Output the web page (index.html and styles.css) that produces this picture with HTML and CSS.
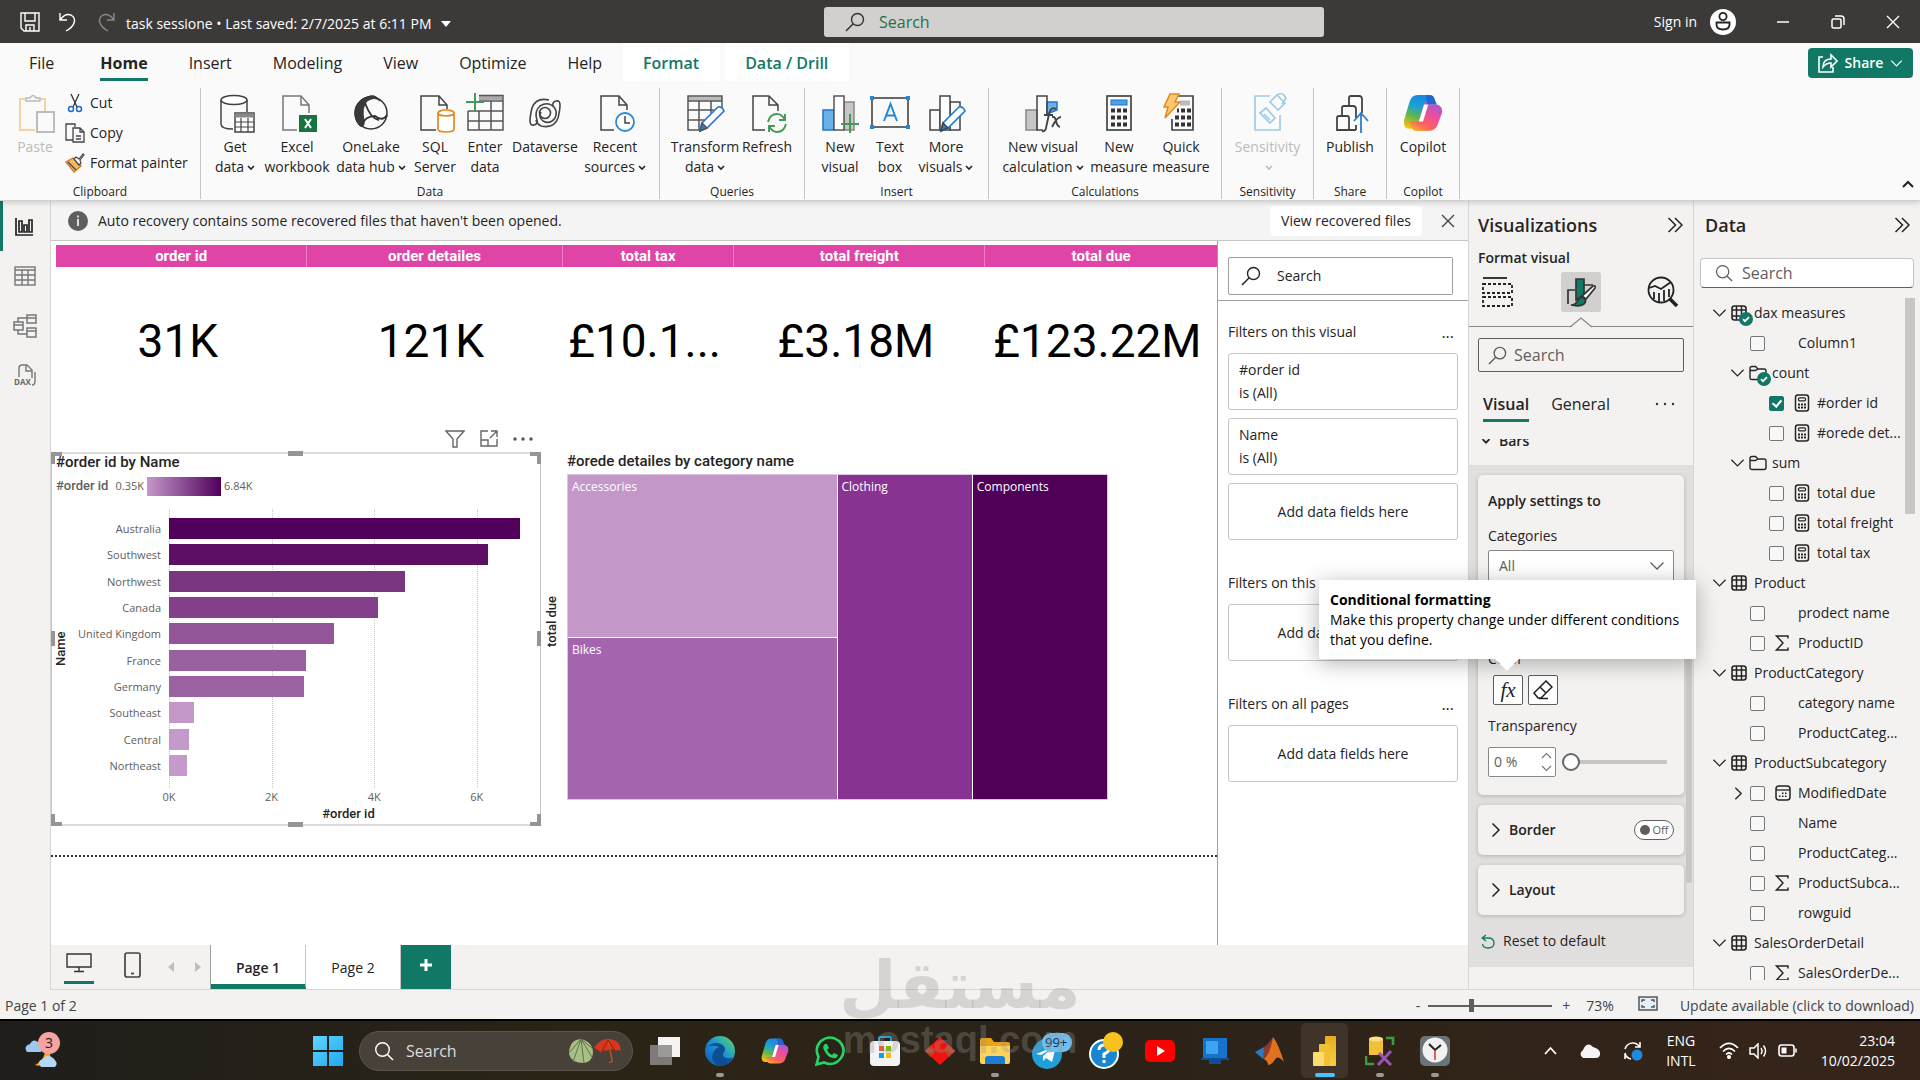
FILE: index.html
```html
<!DOCTYPE html>
<html lang="en">
<head>
<meta charset="utf-8">
<title>task sessione</title>
<link rel="stylesheet" href="styles.css">
</head>
<body>
<svg class="defs" aria-hidden="true">
  <defs>
    <symbol id="mag" viewBox="0 0 20 20"><circle cx="12.500" cy="7.500" r="6" fill="none" stroke="currentColor" stroke-width="1.400"/><path d="M8.200 11.800L1 19" stroke="currentColor" stroke-width="1.500"/></symbol>
    <symbol id="mag2" viewBox="0 0 20 20"><circle cx="8.500" cy="8.500" r="6.800" fill="none" stroke="currentColor" stroke-width="1.400"/><path d="M13.500 13.500L19 19" stroke="currentColor" stroke-width="1.500"/></symbol>
    <symbol id="dn" viewBox="0 0 16 10"><path d="M1.500 1.500L8 8l6.500-6.500" fill="none" stroke="currentColor" stroke-width="1.300"/></symbol>
    <symbol id="dnb" viewBox="0 0 8 6"><path d="M1 1l3 3 3-3" fill="none" stroke="currentColor" stroke-width="1.600"/></symbol>
    <symbol id="rt" viewBox="0 0 10 16"><path d="M1.500 1.500L8 8l-6.500 6.500" fill="none" stroke="currentColor" stroke-width="1.500"/></symbol>
    <symbol id="rr" viewBox="0 0 16 16"><path d="M1.500 1L8.500 8l-7 7M8 1l7 7-7 7" fill="none" stroke="currentColor" stroke-width="1.500"/></symbol>
    <symbol id="x" viewBox="0 0 14 14"><path d="M1 1l12 12M13 1L1 13" fill="none" stroke="currentColor" stroke-width="1.400"/></symbol>
    <symbol id="tbl" viewBox="0 0 16 16"><rect x="1" y="1" width="14" height="14" rx="2.500" fill="none" stroke="currentColor" stroke-width="1.600"/><path d="M5.500 1v14M10.500 1v14M1 5h14M1 11h14" stroke="currentColor" stroke-width="1.500"/></symbol>
    <symbol id="fold" viewBox="0 0 18 16"><path d="M1 3.500Q1 1.500 3 1.500h3.500l2.500 2.500h6q2 0 2 2v6.500q0 2-2 2H3q-2 0-2-2zM1 5.500h5.500L9 4" fill="none" stroke="currentColor" stroke-width="1.400"/></symbol>
    <symbol id="calc" viewBox="0 0 16 18"><rect x="1.500" y="1" width="13" height="16" rx="2.500" fill="none" stroke="currentColor" stroke-width="1.500"/><rect x="4.500" y="3.800" width="7" height="3" rx="1" fill="none" stroke="currentColor" stroke-width="1.200"/><path d="M4 10.500h2m1 0h2m1 0h2M4 13.500h2m1 0h2m1 0h2" stroke="currentColor" stroke-width="1.800"/></symbol>
    <symbol id="sig" viewBox="0 0 14 16"><path d="M13 3.500V1H1.500L8 8l-6.500 7H13v-2.500" fill="none" stroke="currentColor" stroke-width="1.400"/></symbol>
    <symbol id="cal" viewBox="0 0 16 16"><rect x="1" y="1" width="14" height="14" rx="3" fill="none" stroke="currentColor" stroke-width="1.500"/><path d="M1 5h14" stroke="currentColor" stroke-width="1.300"/><path d="M7 8.300h1.500m1.500 0h1.500M4 11.300h1.500m1.500 0h1.500m1.500 0h1.500" stroke="currentColor" stroke-width="1.400"/></symbol>
    <symbol id="badge" viewBox="0 0 14 14"><circle cx="7" cy="7" r="7" fill="#117865"/><path d="M4 7.200l2 2 4-4" fill="none" stroke="#fff" stroke-width="1.800"/></symbol>
    <symbol id="copilot" viewBox="0 0 38 34">
      <path d="M14 0h11q4 0 5 4l2 5h-9l-6 20q-1 3-5 3h-6q-6 0-5-8L6 7q2-7 8-7z" fill="url(#cpA)"/>
      <path d="M24 34H13q-4 0-5-4l-2-5h9l6-20q1 4 5 4h6q6 1 5 8l-4 11q-2 6-9 6z" fill="url(#cpB)"/>
      <path d="M20 9h4l-5 16h-4z" fill="#fff"/>
      <path d="M22 0h3q4 0 5 4l2 5h-9z" fill="#2b4fc4" opacity=".6"/>
    </symbol>
    <linearGradient id="cpA" x1=".6" y1="0" x2=".2" y2="1"><stop offset="0" stop-color="#1a84e0"/><stop offset=".35" stop-color="#1a9fd8"/><stop offset=".65" stop-color="#5fb84a"/><stop offset="1" stop-color="#ffc20f"/></linearGradient>
    <linearGradient id="cpB" x1=".8" y1="0" x2=".3" y2="1"><stop offset="0" stop-color="#9b5ae0"/><stop offset=".45" stop-color="#ee4d9b"/><stop offset=".8" stop-color="#f9655b"/><stop offset="1" stop-color="#f8a33a"/></linearGradient>
    <linearGradient id="edge" x1="0" y1="1" x2="1" y2="0"><stop offset="0" stop-color="#0c59a4"/><stop offset=".5" stop-color="#1b8fdc"/><stop offset="1" stop-color="#5ee05c"/></linearGradient>
    <linearGradient id="win" x1="0" y1="0" x2="1" y2="1"><stop offset="0" stop-color="#5fd6ff"/><stop offset="1" stop-color="#1fa7f0"/></linearGradient>
    <linearGradient id="pbi" x1="0" y1="0" x2="0" y2="1"><stop offset="0" stop-color="#e8ad1d"/><stop offset="1" stop-color="#f5cf4a"/></linearGradient>
  </defs>
</svg>

<header class="titlebar">
  <div class="tb-left">
    <button class="ib" aria-label="Save"><svg width="20" height="20" fill="none" stroke="#fff" stroke-width="1.400"><path d="M1 1h18v18H4l-3-3zM5 1v8h10V1M6 19v-6h8v6M10 19v-4"/></svg></button>
    <button class="ib" aria-label="Undo"><svg width="20" height="20" fill="none" stroke="#fff" stroke-width="1.400"><path d="M2 1v7h7M2 8q5-7 11-5 5 3 3 8-1 4-8 8"/></svg></button>
    <button class="ib" aria-label="Redo"><svg width="20" height="20" fill="none" stroke="#888" stroke-width="1.400"><path d="M18 1v7h-7M18 8q-5-7-11-5-5 3-3 8 1 4 8 8"/></svg></button>
    <button class="doc">task sessione • Last saved: 2/7/2025 at 6:11 PM <svg width="10" height="6"><path d="M0 0h10L5 6z" fill="#fff"/></svg></button>
  </div>
  <label class="tb-search"><svg width="20" height="20"><use href="#mag"/></svg><input type="text" placeholder="Search" aria-label="Search"></label>
  <div class="tb-right">
    <button class="sign">Sign in <svg width="26" height="26"><circle cx="13" cy="13" r="13" fill="#fff"/><circle cx="13" cy="7.500" r="3.600" fill="none" stroke="#222" stroke-width="1.800"/><path d="M6.500 13.500h13v2q0 5-6.500 5t-6.500-5z" fill="none" stroke="#222" stroke-width="1.800"/></svg></button>
    <button class="win" aria-label="Minimize"><svg width="14" height="14"><path d="M1 7h12" stroke="#fff" stroke-width="1.500"/></svg></button>
    <button class="win" aria-label="Restore"><svg width="14" height="14" fill="none" stroke="#fff" stroke-width="1.500"><rect x="1" y="4" width="9" height="9" rx="1.500"/><path d="M4 1h6q3 0 3 3v6"/></svg></button>
    <button class="win" aria-label="Close"><svg width="14" height="14" color="#fff"><use href="#x"/></svg></button>
  </div>
</header>

<section class="ribbon">
  <nav class="tabs">
    <a href="#" class="file">File</a><a href="#" class="on"><span>Home</span></a><a href="#">Insert</a><a href="#">Modeling</a><a href="#">View</a><a href="#">Optimize</a><a href="#">Help</a><a href="#" class="ctx">Format</a><a href="#" class="ctx">Data / Drill</a>
    <button class="share"><svg width="20" height="20" fill="none" stroke="#fff" stroke-width="1.600"><path d="M5 4H1v15h14v-5M5 14q0-8 8-8V2l6 6-6 6v-4q-5 0-8 4z"/></svg>Share<svg width="13" height="9"><use href="#dn" stroke-width="2"/></svg></button>
  </nav>
  <div class="groups">
    <div class="grp g-clip">
      <div class="btns">
        <button class="rb off"><svg width="40" height="40" fill="none"><path d="M11 6H5v31h15" stroke="#f3d3a0" stroke-width="2"/><path d="M25 6h5v12" stroke="#f3d3a0" stroke-width="2"/><path d="M11 8V5h4q3-5 6 0h4v3z" stroke="#bbb" stroke-width="1.500"/><rect x="22" y="19" width="17" height="20" fill="#fafafa" stroke="#b5b5b5" stroke-width="1.800"/></svg>Paste</button>
        <div class="small">
          <button><svg width="20" height="20" fill="none"><path d="M6 1l6 13M14 1L8 14" stroke="#333" stroke-width="1.300"/><circle cx="6" cy="16" r="2.500" stroke="#1e6fc0" stroke-width="1.500"/><circle cx="14" cy="16" r="2.500" stroke="#1e6fc0" stroke-width="1.500"/></svg>Cut</button>
          <button><svg width="20" height="20" fill="none" stroke="#444" stroke-width="1.300"><path d="M8 17H1V1h9v3M8 5h7l4 4v10H8zM15 5v4h4M11 13h5M11 16h5"/></svg>Copy</button>
          <button><svg width="20" height="20" fill="none"><path d="M8 5l8 8-7 6L1 9z" fill="#f6b765" stroke="#d07c1f" stroke-width="1.400"/><path d="M3 9l8 8M9 6l2-2 3 2 4-5 1 1-4 5 1 3-2 2z" stroke="#444" stroke-width="1.200" fill="#fafafa"/></svg>Format painter</button>
        </div>
      </div>
      <div class="gl">Clipboard</div>
    </div>
    <div class="grp g-data">
      <div class="btns">
        <button class="rb"><svg width="40" height="40" fill="none" stroke="#444" stroke-width="1.500"><path d="M18 36Q6 36 6 31V7M32 7v12"/><ellipse cx="19" cy="7" rx="13" ry="4.500" fill="#fff"/><rect x="20" y="20" width="19" height="19" fill="#fff"/><path d="M20 22.500h19" stroke-width="4" stroke="#888"/><path d="M20 29h19M20 34h19M26 25v14M33 25v14" stroke-width="1.200"/></svg>Get<br><span>data<svg class="c" width="8" height="6"><use href="#dnb"/></svg></span></button>
        <button class="rb"><svg width="40" height="40" fill="none" stroke="#777" stroke-width="1.500"><path d="M20 37H6V3h18l8 9v8M24 3v9h8"/><rect x="22" y="22" width="18" height="17" fill="#17733f" stroke="none"/><path d="M28 26l6 9M34 26l-6 9" stroke="#fff" stroke-width="2"/></svg>Excel<br><span>workbook</span></button>
        <button class="rb"><svg width="40" height="40" fill="none" stroke="#333"><circle cx="20" cy="20" r="16" stroke-width="1.500"/><path d="M16 4C4 7 0 24 9 33q5 2 4-6-3-12 3-19 8-5 13 0-5-8-13-4z" fill="#3b3a39"/><path d="M14 10q6 16 14 17M10 33q4-10 14-10 8 6 12-1" stroke-width="1.800"/></svg>OneLake<br><span>data hub<svg class="c" width="8" height="6"><use href="#dnb"/></svg></span></button>
        <button class="rb"><svg width="40" height="40" fill="none" stroke="#444" stroke-width="1.500"><path d="M21 37H6V3h18l8 9v4M24 3v9h8"/><path d="M23 20v16q0 3 8 3t8-3V20" fill="#fff" stroke="#e08a1e" stroke-width="1.700"/><ellipse cx="31" cy="20" rx="8" ry="3" fill="#fff" stroke="#e08a1e" stroke-width="1.700"/></svg>SQL<br><span>Server</span></button>
        <button class="rb"><svg width="40" height="40" fill="none" stroke="#555"><path d="M14 5h23" stroke="#aaa" stroke-width="4"/><path d="M14 2.500h24V37H3V18M14 8h24M3 18h35M3 28h35M14 18v19M26 8v29" stroke-width="1.500"/><path d="M10 0v18M1 9h18" stroke="#3f9b55" stroke-width="2"/></svg>Enter<br><span>data</span></button>
        <button class="rb"><svg width="40" height="40" fill="none" stroke="#444" stroke-width="1.600"><path d="M24 7q-13-3-17 8-2 8-2 13 0 5 4 4 4-1 3-5-3-9 3-14 8-5 14 1 4 5 1 11-5 7-12 3-5-4-2-9"/><path d="M16 33q13 3 17-8 2-8 2-13 0-5-4-4-4 1-3 5M16 33q-4-2-5-6"/><circle cx="20" cy="20" r="5.500"/></svg>Dataverse</button>
        <button class="rb"><svg width="40" height="40" fill="none" stroke="#444" stroke-width="1.500"><path d="M19 37H6V3h18l8 9v5M24 3v9h8"/><circle cx="30" cy="29" r="9" fill="#fff" stroke="#2b88d8" stroke-width="1.800"/><path d="M30 23v7h5"/></svg>Recent<br><span>sources<svg class="c" width="8" height="6"><use href="#dnb"/></svg></span></button>
      </div>
      <div class="gl">Data</div>
    </div>
    <div class="grp g-query">
      <div class="btns">
        <button class="rb"><svg width="40" height="40" fill="none" stroke="#555" stroke-width="1.500"><path d="M3 5.500h34" stroke="#bbb" stroke-width="4"/><path d="M15 37H3V3h34v12M3 8h34M3 17h26M3 27h18M14 8v29M26 8v12"/><path d="M15 38l2-8 16-16q4-1 6 4L22 35z" fill="#fff" stroke="#2b7cd3" stroke-width="1.700"/><path d="M15 38l2-8 5 5z" fill="#2b7cd3"/></svg>Transform<br><span>data<svg class="c" width="8" height="6"><use href="#dnb"/></svg></span></button>
        <button class="rb"><svg width="40" height="40" fill="none" stroke="#444" stroke-width="1.500"><path d="M18 37H6V3h16l9 9v6M22 3v9h9"/><path d="M21 29q2-8 9-8 5 0 8 6M38 21v6h-6M39 31q-2 8-9 8-5 0-8-6M22 39v-6h6" stroke="#3f9b55" stroke-width="1.900"/></svg>Refresh</button>
      </div>
      <div class="gl">Queries</div>
    </div>
    <div class="grp g-ins">
      <div class="btns">
        <button class="rb"><svg width="40" height="40" fill="none" stroke="#555" stroke-width="1.500"><rect x="3" y="17" width="11" height="20" fill="#6db1ea" stroke="#1f74c4"/><rect x="24" y="9" width="10" height="28" fill="#c8c6c4" stroke="#888"/><rect x="14" y="3" width="10" height="34" fill="#fff"/><path d="M30 21v19M21 31h18" stroke="#3f9b55" stroke-width="2"/></svg>New<br><span>visual</span></button>
        <button class="rb"><svg width="40" height="40" fill="none"><rect x="2" y="5" width="36" height="29" stroke="#444" stroke-width="1.600"/><path d="M0 3h4v4H0zM36 3h4v4h-4zM0 32h4v4H0zM36 32h4v4h-4z" fill="#1f87d6"/><path d="M14 28l6.500-17L27 28M16 22.500h9" stroke="#1f87d6" stroke-width="1.900"/></svg>Text<br><span>box</span></button>
        <button class="rb"><svg width="40" height="40" fill="none" stroke="#444" stroke-width="1.500"><path d="M4 17h10v20H4zM24 9h10v28H24z"/><rect x="14" y="3" width="10" height="34" fill="#fff"/><path d="M15 38l2-8 16-16q4-1 6 4L22 35z" fill="#fff" stroke="#2b7cd3" stroke-width="1.700"/><path d="M15 38l2-8 5 5z" fill="#2b7cd3"/></svg>More<br><span>visuals<svg class="c" width="8" height="6"><use href="#dnb"/></svg></span></button>
      </div>
      <div class="gl">Insert</div>
    </div>
    <div class="grp g-calc">
      <div class="btns">
        <button class="rb"><svg width="40" height="40" fill="none" stroke="#444" stroke-width="1.500"><rect x="3" y="17" width="11" height="20" fill="#c8c6c4" stroke="#888"/><path d="M24 9h10v8l-10 4z" fill="#6db1ea" stroke="#1f74c4"/><path d="M20 37h-6V3h10v18"/><path d="M33 16q-5-3-7 5l-3 14q-1 4-4 3M21 22h9M29 24q3-1 4 4t4 6M38 24q-4 0-9 10" stroke-width="1.900"/></svg>New visual<br><span>calculation<svg class="c" width="8" height="6"><use href="#dnb"/></svg></span></button>
        <button class="rb"><svg width="40" height="40" fill="none"><rect x="8" y="3" width="24" height="34" stroke="#444" stroke-width="1.700"/><rect x="12" y="7" width="16" height="5" fill="#4ba0e8" stroke="#1f74c4"/><path d="M12 17.500h4m2 0h4m2 0h4M12 24.500h4m2 0h4m2 0h4M12 31.500h4m2 0h4m2 0h4" stroke="#333" stroke-width="4"/></svg>New<br><span>measure</span></button>
        <button class="rb"><svg width="40" height="40" fill="none"><path d="M17 3h15v34H11V26" stroke="#444" stroke-width="1.700"/><path d="M19 10h10" stroke="#bbb" stroke-width="5"/><path d="M16 17.500h2m2 0h4m2 0h4M14 24.500h4m2 0h4m2 0h4M14 31.500h4m2 0h4m2 0h4" stroke="#333" stroke-width="4"/><path d="M9 1h9l-4 8h5L4 25l3-11H3z" fill="#fbc871" stroke="#e08a1e" stroke-width="1.500"/></svg>Quick<br><span>measure</span></button>
      </div>
      <div class="gl">Calculations</div>
    </div>
    <div class="grp g-sens">
      <div class="btns">
        <button class="rb off"><svg width="40" height="40" fill="none" stroke="#9fcbe8" stroke-width="1.700"><path d="M22 3H7v34h25V22M12 20l6-5 9 10-5 5zM16 21l6 6M22 9l7-7 8 8-7 7zM29 2l5-2 4 5-4 6"/></svg>Sensitivity<br><svg class="c" width="8" height="6"><use href="#dnb"/></svg></button>
      </div>
      <div class="gl">Sensitivity</div>
    </div>
    <div class="grp g-one">
      <div class="btns">
        <button class="rb"><svg width="40" height="40" fill="none" stroke="#444" stroke-width="1.800"><path d="M26 37H7V25q0-2 2-2h8q2 0 2 2v12M12 22v-7q0-2 2-2h9q3 0 3 3v9M19 12V5q0-2 2-2h8q3 0 3 3v14M26 32v5"/><path d="M31 40V21M24 28l7-8 7 8" stroke="#2b7cd3"/></svg>Publish</button>
      </div>
      <div class="gl">Share</div>
    </div>
    <div class="grp g-one">
      <div class="btns">
        <button class="rb"><svg width="40" height="40" viewBox="0 -2 38 38"><use href="#copilot" width="38" height="34"/></svg>Copilot</button>
      </div>
      <div class="gl">Copilot</div>
    </div>
    <button class="collapse" aria-label="Collapse ribbon"><svg width="12" height="8"><path d="M1 7l5-5 5 5" fill="none" stroke="#222" stroke-width="2"/></svg></button>
  </div>
</section>

<main class="work">
  <nav class="rail">
    <button class="on" aria-label="Report view"><svg width="18" height="19" fill="none" stroke="#222" stroke-width="1.700"><path d="M1 1v17h17"/><path d="M4 4h3v11H4zM9 8h3v7H9zM14 3h3v12h-3z"/></svg></button>
    <button aria-label="Table view"><svg width="22" height="20" fill="none" stroke="#777" stroke-width="1.400"><rect x="1" y="1" width="20" height="18"/><path d="M1 4h20M1 9h20M1 14h20M8 4v15M14 4v15"/></svg></button>
    <button aria-label="Model view"><svg width="24" height="24" fill="none" stroke="#777" stroke-width="1.500"><path d="M14 1h9v8h-9zM1 8h9v8H1zM14 14h9v9h-9zM14 4h9M1 11h9M14 17h9M5 8V4h9M5 16v4h9"/></svg></button>
    <button aria-label="DAX query view"><svg width="24" height="24" fill="none" stroke="#777" stroke-width="1.400"><path d="M6 13V4q0-3 3-3h5l5 5v8M13 1v6h6M22 8v9q0 4-3 4"/><text x="1" y="21" font-size="8" font-weight="700" stroke="none" fill="#666">DAX</text></svg></button>
  </nav>

  <section class="center">
    <div class="info">
      <svg width="20" height="20"><circle cx="10" cy="10" r="10" fill="#605e5c"/><path d="M10 8v7M10 4.500v2" stroke="#fff" stroke-width="1.600"/></svg>
      <span>Auto recovery contains some recovered files that haven't been opened.</span>
      <button class="view">View recovered files</button>
      <button class="ib" aria-label="Dismiss"><svg width="14" height="14"><use href="#x"/></svg></button>
    </div>
    <div class="split">
      <div class="canvas">
        <table class="kpi">
          <colgroup><col class="k1"><col class="k2"><col class="k3"><col class="k1"><col class="k4"></colgroup>
          <thead><tr><th>order id</th><th>order detailes</th><th>total tax</th><th>total freight</th><th>total due</th></tr></thead>
          <tbody><tr><td>31K</td><td>121K</td><td>£10.1...</td><td>£3.18M</td><td>£123.22M</td></tr></tbody>
        </table>
        <div class="visuals">
          <div class="vwrap">
            <div class="vtools">
              <button class="ib" aria-label="Filter"><svg width="20" height="18" fill="none" stroke="#666" stroke-width="1.400"><path d="M1 1h18l-7 8v8H8V9z"/></svg></button>
              <button class="ib" aria-label="Focus mode"><svg width="18" height="17" fill="none" stroke="#666" stroke-width="1.400"><path d="M8 1H1v15h16V9M11 1h6v6M17 1l-7 7M1 10h7v6"/></svg></button>
              <button class="ib" aria-label="More options"><svg width="20" height="6" fill="#555"><circle cx="2" cy="3" r="1.700"/><circle cx="10" cy="3" r="1.700"/><circle cx="18" cy="3" r="1.700"/></svg></button>
            </div>
            <div class="visual sel">
              <i class="h tl"></i><i class="h tc"></i><i class="h tr"></i><i class="h ml"></i><i class="h mr"></i><i class="h bl"></i><i class="h bc"></i><i class="h br"></i>
              <h3>#order id by Name</h3>
              <div class="legend"><b>#order id</b><span>0.35K</span><i></i><span>6.84K</span></div>
              <div class="chart">
                <div class="vt">Name</div>
                <div class="cats"><span>Australia</span><span>Southwest</span><span>Northwest</span><span>Canada</span><span>United Kingdom</span><span>France</span><span>Germany</span><span>Southeast</span><span>Central</span><span>Northeast</span></div>
                <div class="plot">
                  <div class="lines"><i></i><i></i><i></i><i></i></div>
                  <div class="bars">
                    <i style="width:97.8%;background:#50005b"></i>
                    <i style="width:88.9%;background:#5d0f66"></i>
                    <i style="width:65.6%;background:#7a3580"></i>
                    <i style="width:58.1%;background:#833f8a"></i>
                    <i style="width:46%;background:#925599"></i>
                    <i style="width:38.2%;background:#9a61a1"></i>
                    <i style="width:37.5%;background:#9b62a2"></i>
                    <i style="width:7%;background:#c397c8"></i>
                    <i style="width:5.6%;background:#c49aca"></i>
                    <i style="width:5.1%;background:#c49aca"></i>
                  </div>
                </div>
                <div class="ticks"><span>0K</span><span>2K</span><span>4K</span><span>6K</span></div>
                <div class="xt">#order id</div>
              </div>
            </div>
          </div>
          <div class="tm">
            <h3>#orede detailes by category name</h3>
            <div class="vt">total due</div>
            <div class="map"><div class="m-acc">Accessories</div><div class="m-bike">Bikes</div><div class="m-clo">Clothing</div><div class="m-com">Components</div></div>
          </div>
        </div>
        <div class="pageend"></div>
      </div>
      <aside class="filters">
        <div class="fs"><label class="sbox"><svg width="20" height="20"><use href="#mag"/></svg><input type="text" placeholder="Search" aria-label="Search filters"></label></div>
        <div class="fsec"><h4>Filters on this visual<button aria-label="More">...</button></h4>
          <div class="fc">#order id<br>is (All)</div><div class="fc">Name<br>is (All)</div><div class="fc add">Add data fields here</div></div>
        <div class="fsec"><h4>Filters on this page<button aria-label="More">...</button></h4><div class="fc add">Add data fields here</div></div>
        <div class="fsec"><h4>Filters on all pages<button aria-label="More">...</button></h4><div class="fc add">Add data fields here</div></div>
      </aside>
    </div>
    <div class="pages">
      <div class="devs">
        <button class="dev on" aria-label="Desktop layout"><svg width="26" height="20" fill="none" stroke="#333" stroke-width="1.400"><path d="M1 1h24v13H1zM13 14v4M8 18.500h10"/></svg></button>
        <button class="dev" aria-label="Mobile layout"><svg width="17" height="26" fill="none" stroke="#444" stroke-width="1.700"><rect x="1" y="1" width="15" height="24" rx="2"/><path d="M7 21.500h3"/></svg></button>
        <button class="ar" aria-label="Previous page"><svg width="6" height="10"><path d="M6 0v10L0 5z" fill="#c0bebc"/></svg></button>
        <button class="ar" aria-label="Next page"><svg width="6" height="10"><path d="M0 0v10l6-5z" fill="#c0bebc"/></svg></button>
      </div>
      <button class="pg on">Page 1</button><button class="pg">Page 2</button><button class="plus" aria-label="New page"><svg width="14" height="14"><path d="M7 1v12M1 7h12" stroke="#fff" stroke-width="3"/></svg></button>
    </div>
  </section>

  <aside class="viz">
    <div class="ph"><h2>Visualizations</h2><button class="ib" aria-label="Collapse"><svg width="16" height="16"><use href="#rr"/></svg></button></div>
    <div class="sub">Format visual</div>
    <div class="modes">
      <button aria-label="Build visual"><svg width="32" height="32" fill="none" stroke="#222" stroke-width="1.800"><path d="M1 2h24"/><path d="M1 8h29v9H1zM1 21h29v9H1z" stroke-dasharray="3 2"/></svg></button>
      <button class="on" aria-label="Format visual"><svg width="30" height="32" fill="none" stroke="#333" stroke-width="1.700"><path d="M2 28V14h7M18 9h9"/><path d="M10 3h8v16l-8 5z" fill="#117865"/><path d="M16 20L27 10q3-1 2 2l-9 11z" fill="#fff"/><path d="M5 29q5 0 7-5 2-4 6-2 3 3 0 6-4 3-13 1z" fill="#117865"/></svg></button>
      <button aria-label="Analytics"><svg width="32" height="32" fill="none" stroke="#222" stroke-width="1.800"><circle cx="14" cy="14" r="12.500"/><path d="M2 12l6-2 6 3 10-7M7 16v7M12 17v9M17 14v11M22 13v8"/><path d="M23 23l7 7" stroke-width="3.500"/></svg></button>
    </div>
    <svg class="notch" width="22" height="11" viewBox="0 0 22 11"><path d="M0 11L11 1l11 10z" fill="#f3f2f1"/><path d="M0 10L11 1l11 9" fill="none" stroke="#8a8886" stroke-width="1.300"/></svg>
    <div class="vs"><label class="sbox"><svg width="19" height="19"><use href="#mag"/></svg><input type="text" placeholder="Search" aria-label="Search format options"></label></div>
    <div class="vt-tabs"><a href="#" class="on">Visual</a><a href="#">General</a><button aria-label="More"><svg width="20" height="22" fill="#333"><circle cx="2" cy="11" r="1.200"/><circle cx="10" cy="11" r="1.200"/><circle cx="18" cy="11" r="1.200"/></svg></button></div>
    <div class="barsrow"><div><svg width="10" height="7"><use href="#dnb"/></svg>Bars</div></div>
    <div class="gray">
      <i class="sb"></i>
      <div class="card main">
        <h4>Apply settings to</h4>
        <label for="cat">Categories</label>
        <div class="selw"><select id="cat"><option>All</option></select><svg width="16" height="10"><use href="#dn"/></svg></div>
        <div class="clr">Color</div>
        <div class="fx">
          <button aria-label="Conditional formatting"><em>fx</em></button>
          <button aria-label="Reset color"><svg width="20" height="20" fill="none" stroke="#222" stroke-width="1.500"><path d="M1 13L13 1l6 6L8 18H5zM7 7l6 6M6 18.500h9"/></svg></button>
          <div class="tip" role="tooltip"><b>Conditional formatting</b><br>Make this property change under different conditions that you define.</div>
        </div>
        <label for="tr">Transparency</label>
        <div class="trow"><div class="spin"><input id="tr" type="text" value="0 %"><svg width="11" height="20" fill="none" stroke="#777" stroke-width="1.200"><path d="M1 6l4.500-4.500L10 6M1 14l4.500 4.500L10 14"/></svg></div><input class="rng" type="range" min="0" max="100" value="0" aria-label="Transparency"></div>
      </div>
      <div class="card row"><svg width="10" height="16"><use href="#rt"/></svg><b>Border</b><button class="tog" role="switch" aria-checked="false"><i></i>Off</button></div>
      <div class="card row"><svg width="10" height="16"><use href="#rt"/></svg><b>Layout</b></div>
      <button class="reset"><svg width="14" height="15" fill="none" stroke="#117865" stroke-width="1.300"><path d="M5 1L1 4l4 3M1 4h6q6 0 6 5t-6 5q-5 0-5.500-4"/></svg>Reset to default</button>
    </div>
  </aside>

  <aside class="data">
    <div class="ph"><h2>Data</h2><button class="ib" aria-label="Collapse"><svg width="16" height="16"><use href="#rr"/></svg></button></div>
    <label class="sbox"><svg width="18" height="18"><use href="#mag2"/></svg><input type="text" placeholder="Search" aria-label="Search data"></label>
    <ul class="tree">
      <li class="t"><svg class="cv"><use href="#dn"/></svg><span class="ic"><svg width="16" height="16"><use href="#tbl"/></svg><svg class="bd" width="14" height="14"><use href="#badge"/></svg></span><span>dax measures</span></li>
      <li class="f"><label><input type="checkbox"><span class="ic"></span>Column1</label></li>
      <li class="d"><svg class="cv"><use href="#dn"/></svg><span class="ic"><svg width="18" height="16"><use href="#fold"/></svg><svg class="bd" width="14" height="14"><use href="#badge"/></svg></span><span>count</span></li>
      <li class="m"><label><input type="checkbox" checked><span class="ic"><svg width="16" height="18"><use href="#calc"/></svg></span>#order id</label></li>
      <li class="m"><label><input type="checkbox"><span class="ic"><svg width="16" height="18"><use href="#calc"/></svg></span>#orede det...</label></li>
      <li class="d"><svg class="cv"><use href="#dn"/></svg><span class="ic"><svg width="18" height="16"><use href="#fold"/></svg></span><span>sum</span></li>
      <li class="m"><label><input type="checkbox"><span class="ic"><svg width="16" height="18"><use href="#calc"/></svg></span>total due</label></li>
      <li class="m"><label><input type="checkbox"><span class="ic"><svg width="16" height="18"><use href="#calc"/></svg></span>total freight</label></li>
      <li class="m"><label><input type="checkbox"><span class="ic"><svg width="16" height="18"><use href="#calc"/></svg></span>total tax</label></li>
      <li class="t"><svg class="cv"><use href="#dn"/></svg><span class="ic"><svg width="16" height="16"><use href="#tbl"/></svg></span><span>Product</span></li>
      <li class="f"><label><input type="checkbox"><span class="ic"></span>prodect name</label></li>
      <li class="f"><label><input type="checkbox"><span class="ic"><svg width="14" height="16"><use href="#sig"/></svg></span>ProductID</label></li>
      <li class="t"><svg class="cv"><use href="#dn"/></svg><span class="ic"><svg width="16" height="16"><use href="#tbl"/></svg></span><span>ProductCategory</span></li>
      <li class="f"><label><input type="checkbox"><span class="ic"></span>category name</label></li>
      <li class="f"><label><input type="checkbox"><span class="ic"></span>ProductCateg...</label></li>
      <li class="t"><svg class="cv"><use href="#dn"/></svg><span class="ic"><svg width="16" height="16"><use href="#tbl"/></svg></span><span>ProductSubcategory</span></li>
      <li class="f x"><svg class="cr"><use href="#rt"/></svg><label><input type="checkbox"><span class="ic"><svg width="16" height="16"><use href="#cal"/></svg></span>ModifiedDate</label></li>
      <li class="f"><label><input type="checkbox"><span class="ic"></span>Name</label></li>
      <li class="f"><label><input type="checkbox"><span class="ic"></span>ProductCateg...</label></li>
      <li class="f"><label><input type="checkbox"><span class="ic"><svg width="14" height="16"><use href="#sig"/></svg></span>ProductSubca...</label></li>
      <li class="f"><label><input type="checkbox"><span class="ic"></span>rowguid</label></li>
      <li class="t"><svg class="cv"><use href="#dn"/></svg><span class="ic"><svg width="16" height="16"><use href="#tbl"/></svg></span><span>SalesOrderDetail</span></li>
      <li class="f"><label><input type="checkbox"><span class="ic"><svg width="14" height="16"><use href="#sig"/></svg></span>SalesOrderDe...</label></li>
    </ul>
    <i class="sb"></i>
  </aside>
</main>

<footer class="status">
  <span>Page 1 of 2</span>
  <div class="zoom"><button aria-label="Zoom out">-</button><input type="range" min="0" max="100" value="34" aria-label="Zoom"><button aria-label="Zoom in">+</button><span class="pct">73%</span>
  <button aria-label="Fit to page"><svg width="20" height="15" fill="none" stroke="#555" stroke-width="1.500"><rect x="1" y="1" width="18" height="13" fill="#e6eef6"/><path d="M4 6V4h3M13 4h3v2M16 9v2h-3M7 11H4V9"/></svg></button><a href="#">Update available (click to download)</a></div>
</footer>

<footer class="taskbar">
  <button class="weather" aria-label="Weather"><svg width="36" height="38"><path d="M20 12q8 8 4 16-6 8-14 5 12-6 10-21z" fill="#f5a623"/><path d="M2 20q-4-6 3-8 3-6 8-2 6 4 3 10z" fill="#9cc9f0"/><path d="M16 35q-5-6 2-8 4-6 10-1 6 5 2 9z" fill="#b5d8f7"/><circle cx="24" cy="11" r="11" fill="#f5a3a3"/><text x="20" y="16" font-size="14" fill="#222">3</text></svg></button>
  <div class="apps">
    <button aria-label="Start"><svg width="30" height="30" fill="url(#win)"><path d="M0 0h14v14H0zM16 0h14v14H16zM0 16h14v14H0zM16 16h14v14H16z"/></svg></button>
    <label class="tsearch"><svg width="20" height="20"><use href="#mag2"/></svg><input type="text" placeholder="Search" aria-label="Search Windows">
      <svg width="54" height="26"><path d="M2 16Q2 2 14 1q12 3 12 14-1 9-9 10Q4 25 2 16z" fill="#a9bf86"/><path d="M14 1L6 24M14 1l11 18M14 1l3 24M14 1L2 15M14 1l12 10" stroke="#5e7446"/><path d="M27 10Q33 0 43 1q10 1 11 12-3-2-6 0-4-4-8 0-4-2-6 2-3-4-7-5z" fill="#d8361e"/><path d="M41 2l4 20q1 3-3 2" fill="none" stroke="#b5591b" stroke-width="1.500"/><path d="M41 2l-7 13M41 2l7 11" stroke="#8e1d10"/></svg></label>
    <button aria-label="Task view"><svg width="30" height="28"><rect x="8" width="22" height="20" fill="#f4f4f4"/><rect y="8" width="22" height="20" fill="#8c8a88" opacity=".85"/></svg></button>
    <button class="run" aria-label="Edge"><svg width="30" height="30"><circle cx="15" cy="15" r="15" fill="url(#edge)"/><path d="M1 12Q8 5 16 8q6 3 3 8-3 4 2 6 4 1 7-1-4 9-13 9-6-1-8-8 0-8 7-11-8-3-14 1z" fill="#0d4f94"/></svg></button>
    <button aria-label="Copilot"><svg width="28" height="26"><use href="#copilot"/></svg></button>
    <button aria-label="WhatsApp"><svg width="30" height="30"><path d="M1.500 28.500l2-7.500Q-1 12 6 5q9-7 18 0 8 8 2 17-7 9-17 4.500z" fill="none" stroke="#25d366" stroke-width="2.600"/><path d="M10 8q-3 2-1 6 3 7 9 8 4 1 5-3l-4-2-2 2q-4-2-5-5l2-2-2-4z" fill="#25d366"/></svg></button>
    <button aria-label="Store"><svg width="30" height="30"><path d="M9 6V2q0-1 1-1h10q1 0 1 1v4" fill="none" stroke="#1ba1e2" stroke-width="2"/><rect y="5" width="30" height="25" rx="4" fill="#f3f3f3"/><path d="M9 10h5v5H9z" fill="#f25022"/><path d="M16 10h5v5h-5z" fill="#7fba00"/><path d="M9 17h5v5H9z" fill="#00a4ef"/><path d="M16 17h5v5h-5z" fill="#ffb900"/></svg></button>
    <button aria-label="Remote app"><svg width="30" height="28"><path d="M15 0l15 14-15 14L0 14z" fill="#f2140c"/><path d="M0 14l6-6 5 6-5 6zM30 14l-6-6-5 6 5 6z" fill="#c4402a"/></svg></button>
    <button class="run" aria-label="File Explorer"><svg width="30" height="28"><path d="M0 3q0-2 2-2h9l3 4h14q2 0 2 2v17H0z" fill="#e8a317"/><path d="M0 9h30v16q0 2-2 2H2q-2 0-2-2z" fill="#ffd35a"/><path d="M5 27v-5q0-3 3-3h14q3 0 3 3v5z" fill="#1b7ed0"/></svg></button>
    <button aria-label="Telegram"><svg width="44" height="38"><circle cx="19" cy="22" r="15" fill="#229ed9"/><path d="M8 22l20-8-4 16-6-4-3 3v-5l8-7-10 6z" fill="#fff"/><rect x="14" y="1" width="30" height="19" rx="9" fill="#6cc0f5"/><text x="17" y="15" font-size="13" fill="#123">99+</text></svg></button>
    <button aria-label="Get Help"><svg width="36" height="38"><circle cx="17" cy="22" r="14" fill="#1787d4" stroke="#fff" stroke-width="2"/><path d="M12 18q0-5 5-5t5 4q0 3-5 5v4M17 28v3" fill="none" stroke="#fff" stroke-width="3"/><circle cx="26" cy="10" r="10" fill="#f7c11e"/></svg></button>
    <button aria-label="YouTube"><svg width="30" height="22"><rect width="30" height="22" rx="5" fill="#f00"/><path d="M12 6l8 5-8 5z" fill="#fff"/></svg></button>
    <button aria-label="This PC"><svg width="28" height="28"><path d="M2 1h24v20H2z" fill="#1673c9"/><path d="M5 4h12v13H5z" fill="#3da4f0"/><path d="M0 21h28v2H0zM8 23h12v4H8z" fill="#0c4f93"/></svg></button>
    <button aria-label="MATLAB"><svg width="30" height="28"><path d="M0 15l9-5 4 6-5 6z" fill="#2d7bc0"/><path d="M9 10q4-2 9-10-1 12-7 21l-3 1z" fill="#8a3b2b"/><path d="M18 0q5 6 11 25-5-6-8-4-4 7-8 7 0-4-4-6 6-5 9-22z" fill="#e2711d"/></svg></button>
    <button class="run act" aria-label="Power BI Desktop"><svg width="24" height="30" fill="url(#pbi)"><rect x="12" y="0" width="11" height="30" rx="1"/><rect x="6" y="8" width="11" height="22" rx="1" fill="#f0c136"/><rect x="0" y="16" width="11" height="14" rx="1" fill="#f8dd6f"/></svg></button>
    <button class="run" aria-label="SQL Server Management Studio"><svg width="30" height="30" fill="none"><path d="M4 3h14v16H4z" fill="#f0c136"/><ellipse cx="11" cy="3" rx="7" ry="2.500" fill="#fbe08a"/><path d="M21 2h7v7M1 20v8h8" stroke="#3f9b3f" stroke-width="2.600"/><path d="M14 17l12 12M26 15L13 29" stroke="#9a55b5" stroke-width="3"/></svg></button>
    <button class="run" aria-label="Clock"><svg width="30" height="30"><rect width="30" height="30" rx="5" fill="#6d7478"/><circle cx="15" cy="14" r="12.500" fill="#f1f1f1"/><path d="M9 8l6 6 6-5" fill="none" stroke="#222" stroke-width="2"/><path d="M15 14v10" stroke="#d8361e" stroke-width="1.500"/></svg></button>
  </div>
  <div class="tray">
    <button aria-label="Hidden icons"><svg width="13" height="9"><path d="M1 8l5.500-6L12 8" fill="none" stroke="#fff" stroke-width="1.800"/></svg></button>
    <button aria-label="OneDrive"><svg width="20" height="14"><path d="M3 14q-5-4 0-8 4-9 10-3 8 2 7 8-1 3-4 3z" fill="#f4f4f4"/></svg></button>
    <button aria-label="Update"><svg width="20" height="20" fill="none" stroke="#fff" stroke-width="1.600"><path d="M2 8q2-6 8-6 4 0 7 4M17 1v5h-5M2 12q1 5 6 6M2 18v-5"/><circle cx="14" cy="14" r="5.500" fill="#1c8ae0" stroke="none"/></svg></button>
    <button class="lang">ENG<br>INTL</button>
    <button class="sys" aria-label="Network, sound, battery"><svg width="20" height="17" fill="none" stroke="#fff" stroke-width="1.700"><path d="M1 6q9-9 18 0M4 9.500q6-6 12 0M7 12.500q3-3 6 0"/><circle cx="10" cy="15" r="1.200" fill="#fff"/></svg><svg width="19" height="16" fill="none" stroke="#fff" stroke-width="1.500"><path d="M1 5h4l4-4v14l-4-4H1zM12 5q2 3 0 6M14.500 2.500q4 5.500 0 11"/></svg><svg width="20" height="13" fill="none" stroke="#fff" stroke-width="1.600"><rect x="1" y="1" width="15" height="11" rx="2.500"/><rect x="3.500" y="3.500" width="5" height="6" fill="#fff" stroke="none"/><path d="M18 4.500v4"/></svg></button>
    <button class="clock">23:04<br>10/02/2025</button>
  </div>
</footer>
<div class="mark" aria-hidden="true"><span lang="ar" dir="rtl">مستقل</span><span>mostaql.com</span></div>
</body>
</html>
```
FILE: styles.css
```css
* { box-sizing: border-box; }
html, body { height: 100%; }
body { margin: 0; display: grid; grid-template-rows: 43px auto minmax(0, 1fr) 29px 61px; font: 14px/20px "Open Sans", "Noto Sans", sans-serif; color: #252423; background: #f3f2f1; overflow: hidden; position: relative; }
button { font: inherit; color: inherit; background: none; border: 0; padding: 0; }
input, select { font: inherit; color: inherit; border: 0; background: none; outline: 0; min-width: 0; padding: 0; }
a { color: inherit; text-decoration: none; }
h2, h3, h4, ul { margin: 0; padding: 0; font: inherit; }
svg { flex: none; }
.defs { position: absolute; width: 0; height: 0; }
.ib { display: flex; align-items: center; justify-content: center; }

/* title bar */
.titlebar { background: #3b3a39; color: #fff; display: grid; grid-template-columns: 824fr 500fr 596fr; align-items: center; }
.tb-left { display: flex; align-items: center; gap: 18px; padding-left: 20px; }
.tb-left .doc { display: flex; align-items: center; gap: 9px; margin-left: -8px; padding-top: 5px; }
.tb-search { display: flex; align-items: center; height: 30px; background: #d2d0ce; border-radius: 3px; padding-left: 21px; gap: 14px; color: #333; }
.tb-search input { font-size: 16px; }
.tb-search input::placeholder { color: #217346; opacity: 1; }
.tb-right { display: flex; justify-content: flex-end; align-items: center; height: 100%; }
.sign { display: flex; align-items: center; gap: 13px; margin-right: 19px; }
.win { width: 55px; height: 43px; display: flex; align-items: center; justify-content: center; }

/* ribbon */
.ribbon { background: #fafafa; border-bottom: 1px solid #d0d0d0; box-shadow: 0 2px 5px rgba(0,0,0,.15); z-index: 2; }
.tabs { display: flex; height: 38px; align-items: stretch; font-size: 16px; }
.tabs a { padding: 10px 21px 0 20px; }
.tabs a.file { padding: 10px 26px 0 29px; }
.tabs a.on { font-weight: 700; }
.tabs a.on span { display: block; height: 28px; border-bottom: 3px solid #117865; }
.tabs a.ctx { background: #fff; color: #117865; font-weight: 600; margin-right: 5px; }
.share { margin: 5px 7px 0 auto; height: 30px; width: 105px; background: #117865; color: #fff; border-radius: 4px; font-size: 14px; font-weight: 600; display: flex; align-items: center; justify-content: center; gap: 7px; }
.groups { display: flex; padding: 7px 0 1px; }
.grp { display: flex; flex-direction: column; justify-content: space-between; border-right: 1px solid #c8c6c4; height: 111px; white-space: nowrap; }
.btns { display: grid; padding-top: 5px; align-items: start; justify-content: start; }
.gl { text-align: center; font-size: 12px; line-height: 14px; }
.rb { text-align: center; justify-self: center; display: block; width: 100%; }
.rb > svg:first-child { display: block; margin: 0 auto 4px; }
.rb .c { margin-left: 3px; vertical-align: 1px; }
.off { color: #bdbbb9; }
.g-clip { width: 201px; }
.g-clip .btns { grid-template-columns: 70px auto; }
.g-clip .small { margin-top: -5px; }
.g-clip .small button { display: flex; height: 30px; align-items: center; gap: 5px; margin-left: -5px; }
.g-data { width: 459px; }
.g-data .btns { padding-left: 9px; grid-template-columns: 50px 74px 74px 54px 46px 74px 66px; }
.g-query { width: 145px; }
.g-query .btns { padding-left: 10px; grid-template-columns: 70px 54px; }
.g-ins { width: 184px; }
.g-ins .btns { padding-left: 11px; grid-template-columns: 48px 52px 60px; }
.g-calc { width: 233px; }
.g-calc .btns { padding-left: 9px; grid-template-columns: 90px 62px 62px; }
.g-sens { width: 92px; }
.g-one { width: 73px; }
.g-sens .btns, .g-one .btns { justify-content: stretch; }
.collapse { margin: auto 6px 6px auto; }

/* work area */
.work { display: grid; grid-template-columns: 51px minmax(0, 1fr) 225px 227px; min-height: 0; }
.rail { border-right: 1px solid #d8d6d4; }
.rail button { width: 50px; height: 50px; display: flex; align-items: center; justify-content: center; }
.rail .on { border-left: 3px solid #117865; padding-right: 5px; }
.center { display: flex; flex-direction: column; min-width: 0; }
.info { display: flex; align-items: center; height: 40px; padding: 0 13px 0 17px; gap: 10px; background: #f4f4f4; border-bottom: 1px solid #c8c6c4; }
.info .view { margin-left: auto; background: #fff; border-radius: 4px; height: 30px; width: 152px; }
.info .ib { margin-left: 9px; color: #444; }
.split { flex: 1; display: grid; grid-template-columns: minmax(0, 1fr) 251px; background: #fff; min-height: 0; }
.canvas { padding-top: 4px; overflow: hidden; }
.kpi { width: calc(100% - 5px); margin-left: 5px; border-collapse: collapse; table-layout: fixed; font-family: Roboto, sans-serif; color: #000; }
.k1 { width: 21.6%; } .k2 { width: 22%; } .k3 { width: 14.8%; } .k4 { width: 20%; }
.kpi th { background: #e044a7; color: #fff; font-size: 15px; font-weight: 700; height: 22px; padding: 0; border-left: 1px solid #ec7cc3; line-height: 20px; }
.kpi th:first-child { border-left: 0; }
.kpi td { text-align: center; font-size: 46px; line-height: 56px; height: 158px; padding: 0 7px 10px 0; white-space: nowrap; }
.visuals { display: grid; grid-template-columns: 490fr 676fr; }
.vtools { display: flex; justify-content: flex-end; align-items: center; gap: 15px; height: 27px; padding-right: 8px; }
.visual { position: relative; border: 1px solid #c8c6c4; border-top: 2px solid #dddbd9; border-bottom: 2px solid #dddbd9; height: 374px; display: flex; flex-direction: column; }
h3 { font-family: Roboto, sans-serif; font-weight: 500; font-size: 15px; }
.sel h3 { padding-left: 4px; line-height: 17px; }
.h { position: absolute; border: 0 solid #979593; }
.tl, .tr, .bl, .br { width: 11px; height: 12px; }
.tl { left: -1px; top: -2px; border-width: 4px 0 0 4px; }
.tr { right: -1px; top: -2px; border-width: 4px 4px 0 0; }
.bl { left: -1px; bottom: -2px; border-width: 0 0 4px 4px; }
.br { right: -1px; bottom: -2px; border-width: 0 4px 4px 0; }
.tc, .bc { left: calc(50% - 8px); width: 15px; border-top-width: 5px; }
.tc { top: -3px; } .bc { bottom: -3px; }
.ml, .mr { top: calc(50% - 8px); height: 15px; border-left-width: 4px; }
.ml { left: -1px; } .mr { right: -1px; }
.legend { display: flex; align-items: center; height: 20px; margin-top: 5px; padding-left: 4px; font-size: 11px; color: #605e5c; gap: 3px; }
.legend b { font-family: Roboto, sans-serif; font-size: 13px; font-weight: 500; margin-right: 4px; }
.legend i { width: 74px; height: 19px; background: linear-gradient(90deg, #c497c9, #50005b); }
.chart { flex: 1; display: grid; grid-template-columns: 20px 89px minmax(0, 1fr); grid-template-rows: minmax(0, 1fr) 18px 18px; padding: 13px 12px 0 0; }
.vt { writing-mode: vertical-rl; transform: rotate(180deg); text-align: center; font: 500 13px/18px Roboto, sans-serif; }
.cats { display: flex; flex-direction: column; justify-content: space-between; padding: 9px 0 12px; text-align: right; font-size: 11px; line-height: 21px; color: #605e5c; white-space: nowrap; }
.plot { display: grid; margin-left: 8px; }
.lines, .bars { grid-area: 1 / 1; }
.lines, .ticks { display: grid; grid-template-columns: 2fr 2fr 2fr 1fr; }
.lines i { border-left: 1px dotted #c8c6c4; }
.bars { display: flex; flex-direction: column; justify-content: space-between; padding: 9px 0 12px; }
.bars i { height: 21px; }
.ticks { grid-column: 3; margin-left: 8px; font-size: 11px; line-height: 18px; color: #605e5c; }
.ticks span { width: 20px; margin-left: -10px; text-align: center; }
.xt { grid-column: 3; margin-left: 8px; text-align: center; font: 500 13px/16px Roboto, sans-serif; }
.tm { display: grid; grid-template-columns: 26px minmax(0, 1fr); grid-template-rows: 21px 326px; padding: 28px 109px 0 0; }
.tm h3 { grid-column: 2; line-height: 17px; }
.tm .vt { padding-right: 2px; margin-bottom: 31px; }
.map { display: grid; grid-template-columns: 2fr 1fr 1fr; grid-template-rows: 1fr 1fr; gap: 1px; border: 1px solid #dcc3df; color: #fff; font-size: 12px; line-height: 16px; }
.map div { padding: 4px; }
.m-acc { background: #c497c9; }
.m-bike { background: #a565ae; grid-row: 2; grid-column: 1; }
.m-clo { background: #883292; grid-row: 1 / 3; grid-column: 2; }
.m-com { background: #510058; grid-row: 1 / 3; grid-column: 3; }
.pageend { margin-top: 29px; border-top: 2px dotted #333; }

/* filters */
.filters { border-left: 1px solid #a19f9d; }
.fs { padding: 16px 15px 5px 10px; border-bottom: 1px solid #a19f9d; }
.sbox { display: flex; align-items: center; background: #fff; }
.sbox input { width: 100%; }
.sbox input::placeholder { color: inherit; opacity: 1; }
.fs .sbox { height: 38px; border: 1px solid #a19f9d; border-radius: 2px; padding-left: 12px; gap: 16px; }
.fsec { padding: 21px 10px 0; }
.fsec + .fsec { padding-top: 25px; }
.fsec h4 { display: flex; justify-content: space-between; padding-right: 4px; margin-bottom: 11px; }
.fsec h4 button { font-size: 16px; }
.fc { border: 1px solid #c8c6c4; border-radius: 3px; height: 57px; padding: 4px 10px; line-height: 23px; margin-bottom: 8px; }
.fc.add { text-align: center; line-height: 48px; }

/* page tabs */
.pages { height: 45px; display: flex; border-bottom: 1px solid #d8d6d4; }
.devs { display: flex; width: 160px; border-right: 1px solid #a19f9d; padding-left: 13px; gap: 26px; }
.dev { display: flex; align-items: center; justify-content: center; height: 39px; margin-right: -1px; }
.dev svg { margin: 0 2px; }
.dev + .dev { margin-left: 3px; }
.dev.on { border-bottom: 3px solid #117865; }
.ar { width: 6px; margin-right: -5px; }
.pg { width: 95px; background: #fff; border-right: 1px solid #c8c6c4; padding-top: 2px; }
.pg.on { border-bottom: 5px solid #117865; padding-top: 6px; font-weight: 600; }
.plus { width: 50px; background: #117865; }

/* visualizations */
.viz { border-left: 1px solid #d8d6d4; display: flex; flex-direction: column; position: relative; z-index: 1; background: #f3f2f1; border-bottom: 1px solid #d8d6d4; }
.ph { display: flex; justify-content: space-between; align-items: center; padding: 12px 9px 0; height: 36px; }
.ph h2 { font-size: 18px; line-height: 24px; font-weight: 600; }
.viz .ph { padding-right: 10px; }
.sub { padding: 11px 9px 0; font-weight: 600; }
.modes { display: flex; justify-content: space-between; padding: 4px 14px 0 13px; height: 59px; border-bottom: 1px solid #8a8886; }
.modes button { width: 32px; height: 40px; }
.modes .on { width: 40px; background: #d2d0ce; border-radius: 3px; }
.modes svg { display: block; margin: 4px auto; }
.notch { align-self: center; margin-top: -10px; }
.vs { padding: 10px 9px 0; }
.vs .sbox { height: 34px; border: 1px solid #605e5c; border-radius: 2px; background: none; padding-left: 9px; gap: 7px; font-size: 16px; color: #605e5c; }
.vt-tabs { display: flex; padding: 21px 18px 0 14px; gap: 22px; font-size: 16px; line-height: 22px; height: 67px; align-items: flex-start; }
.vt-tabs a { padding-bottom: 4px; border-bottom: 3px solid transparent; }
.vt-tabs .on { font-weight: 600; border-color: #117865; }
.vt-tabs button { margin-left: auto; }
.barsrow { overflow: hidden; height: 26px; padding-left: 12px; }
.barsrow div { display: flex; align-items: center; gap: 8px; margin-top: -8px; font-weight: 600; }
.gray { position: relative; background: #e1dfdd; padding: 10px 9px 12px; }
.card { background: #f3f2f1; border-radius: 5px; box-shadow: 0 1px 4px rgba(0,0,0,.2); margin-bottom: 10px; }
.main { height: 320px; padding: 16px 10px; display: flex; flex-direction: column; }
.main h4 { font-weight: 600; margin-bottom: 15px; }
.selw { display: flex; align-items: center; height: 32px; border: 1px solid #8a8886; background: #fff; margin-top: 4px; padding-right: 8px; border-radius: 2px; color: #605e5c; }
.selw select { appearance: none; flex: 1; padding-left: 10px; }
.clr { margin-top: 67px; }
.fx { position: relative; display: flex; gap: 5px; padding-left: 5px; margin: 6px 0 11px; }
.fx button { width: 30px; height: 30px; border: 1px solid #605e5c; border-radius: 2px; background: #fff; display: flex; align-items: center; justify-content: center; }
.fx em { font: italic 21px/24px "Liberation Serif", serif; }
.tip { position: absolute; left: -169px; bottom: 46px; z-index: 2; width: 377px; background: #fff; color: #000; padding: 10px 11px 9px; box-shadow: 0 4px 22px rgba(0,0,0,.3); border-radius: 2px; }
.tip::after { content: ""; position: absolute; left: 176px; top: 100%; border: 12px solid transparent; border-top-color: #fff; border-bottom: 0; }
.trow { display: flex; align-items: center; gap: 6px; margin-top: 11px; }
.spin { width: 68px; height: 30px; border: 1px solid #8a8886; background: #fff; display: flex; align-items: center; padding: 0 3px 0 5px; color: #605e5c; border-radius: 2px; }
.spin input { flex: 1; }
.rng { appearance: none; flex: 1; height: 18px; margin: 0 7px 0 0; }
.rng::-webkit-slider-runnable-track { height: 4px; background: #c8c6c4; }
.rng::-webkit-slider-thumb { appearance: none; width: 18px; height: 18px; margin-top: -7px; border: 2px solid #666; border-radius: 50%; background: #fff; }
.card.row { height: 50px; display: flex; align-items: center; gap: 8px; padding: 0 10px 0 13px; }
.card b { font-weight: 600; }
.card .tip b { font-weight: 700; }
.tog { margin-left: auto; width: 40px; height: 20px; border: 1px solid #605e5c; border-radius: 10px; background: #fff; font-size: 11px; line-height: 18px; color: #605e5c; display: flex; align-items: center; justify-content: center; gap: 3px; }
.tog i { width: 10px; height: 10px; border-radius: 50%; background: #605e5c; }
.reset { display: flex; align-items: center; gap: 8px; padding: 6px 3px 4px; }
.sb { position: absolute; background: #c8c6c4; }
.gray .sb { right: 1px; top: 130px; width: 6px; height: 288px; border-radius: 3px; }

/* data pane */
.data { border-left: 1px solid #d8d6d4; position: relative; display: flex; flex-direction: column; min-height: 0; overflow: hidden; border-bottom: 1px solid #d8d6d4; }
.data .ph { padding: 12px 10px 0 11px; }
.data .sbox { margin: 21px 6px 10px; height: 30px; border: 1px solid #c8c6c4; border-bottom-color: #605e5c; border-radius: 4px; padding-left: 14px; gap: 9px; font-size: 16px; color: #605e5c; flex: none; }
.tree { list-style: none; overflow: hidden; flex: 1; margin-bottom: 9px; }
.tree li { height: 30px; display: flex; align-items: center; white-space: nowrap; }
.tree label { display: flex; align-items: center; }
.tree input { appearance: none; width: 15px; height: 15px; border: 1px solid #777; border-radius: 2px; margin: 0 10px 0 0; background: #f8f8f8; }
.tree input:checked { border-color: #117865; background: #117865; position: relative; }
.tree input:checked::after { content: ""; position: absolute; left: 4px; top: 1px; width: 4px; height: 7px; border: solid #fff; border-width: 0 2px 2px 0; transform: rotate(40deg); }
.ic { display: flex; width: 16px; margin-right: 7px; position: relative; }
.bd { position: absolute; left: 8px; top: 7px; }
.cv { width: 15px; height: 10px; margin-right: 4px; }
.cr { width: 9px; height: 15px; margin-right: 7px; }
.tree .t { padding-left: 18px; }
.tree .f { padding-left: 56px; }
.tree .x { padding-left: 40px; }
.tree .d { padding-left: 36px; }
.tree .m { padding-left: 75px; }
.d .ic { width: 18px; margin-right: 5px; }
.data .sb { right: 5px; top: 97px; width: 10px; height: 216px; }

/* status bar */
.status { display: flex; justify-content: space-between; align-items: center; padding: 2px 6px 0 5px; color: #444; }
.zoom { display: flex; align-items: center; }
.zoom input { appearance: none; width: 124px; height: 14px; margin: 0 10px 0 8px; }
.zoom input::-webkit-slider-runnable-track { height: 2px; background: #605e5c; }
.zoom input::-webkit-slider-thumb { appearance: none; width: 5px; height: 13px; margin-top: -6px; background: #605e5c; }
.pct { margin: 0 24px 0 16px; }
.zoom a { margin-left: 22px; }

/* taskbar */
.taskbar { border-top: 2px solid #000; background: linear-gradient(90deg, #201e1b, #2a2416 30%, #2c2318 60%, #36241a); color: #fff; display: flex; align-items: center; }
.taskbar button { display: flex; align-items: center; justify-content: center; }
.weather { width: 85px; margin-right: 215px; }
.apps { display: flex; align-items: center; }
.apps button { width: 55px; height: 55px; position: relative; }
.run::after { content: ""; position: absolute; bottom: 1px; width: 8px; height: 4px; border-radius: 2px; background: #999; }
.apps .act { background: #40342a; border-radius: 5px; width: 47px; margin: 0 4px; }
.act::after { width: 20px; background: #4cc2ff; }
.tsearch { width: 274px; height: 40px; margin: 0 4px; border-radius: 20px; background: #48413a; border: 1px solid #5c554a; display: flex; align-items: center; gap: 12px; padding: 0 11px 0 14px; }
.tsearch input { flex: 1; font-size: 16px; }
.tsearch input::placeholder { color: #ddd; opacity: 1; }
.tray { margin-left: auto; display: flex; align-items: center; padding-right: 25px; gap: 23px; }
.tray .lang { display: block; }
.tray .sys { gap: 10px; }
.tray .clock { display: block; text-align: right; }

/* watermark */
.mark { position: absolute; right: 844px; bottom: 18px; width: 232px; display: flex; flex-direction: column; align-items: center; color: rgba(150,150,150,.32); font: 700 38px/44px "Liberation Sans", sans-serif; pointer-events: none; z-index: 5; }
.mark span:first-child { font: 700 66px/64px "DejaVu Sans", sans-serif; }
```
